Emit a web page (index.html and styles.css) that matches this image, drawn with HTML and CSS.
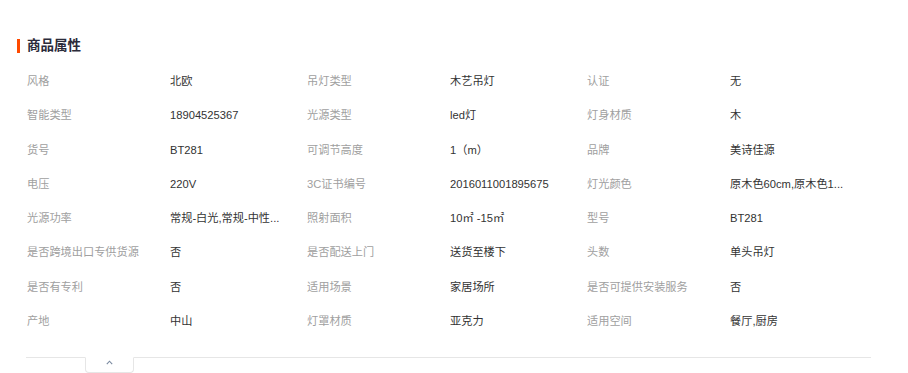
FILE: index.html
```html
<!DOCTYPE html>
<html lang="zh-CN">
<head>
<meta charset="utf-8">
<title>商品属性</title>
<link rel="stylesheet" href="styles.css">
</head>
<body>
<section class="attrs">
  <h2 class="attrs-title">商品属性</h2>
  <dl class="attrs-grid">
    <dt>风格</dt><dd>北欧</dd>
    <dt>吊灯类型</dt><dd>木艺吊灯</dd>
    <dt>认证</dt><dd>无</dd>

    <dt>智能类型</dt><dd>18904525367</dd>
    <dt>光源类型</dt><dd>led灯</dd>
    <dt>灯身材质</dt><dd>木</dd>

    <dt>货号</dt><dd>BT281</dd>
    <dt>可调节高度</dt><dd>1（m）</dd>
    <dt>品牌</dt><dd>美诗佳源</dd>

    <dt>电压</dt><dd>220V</dd>
    <dt>3C证书编号</dt><dd>2016011001895675</dd>
    <dt>灯光颜色</dt><dd>原木色60cm,原木色1...</dd>

    <dt>光源功率</dt><dd>常规-白光,常规-中性...</dd>
    <dt>照射面积</dt><dd>10㎡ -15㎡</dd>
    <dt>型号</dt><dd>BT281</dd>

    <dt>是否跨境出口专供货源</dt><dd>否</dd>
    <dt>是否配送上门</dt><dd>送货至楼下</dd>
    <dt>头数</dt><dd>单头吊灯</dd>

    <dt>是否有专利</dt><dd>否</dd>
    <dt>适用场景</dt><dd>家居场所</dd>
    <dt>是否可提供安装服务</dt><dd>否</dd>

    <dt>产地</dt><dd>中山</dd>
    <dt>灯罩材质</dt><dd>亚克力</dd>
    <dt>适用空间</dt><dd>餐厅,厨房</dd>
  </dl>
  <div class="attrs-foot">
    <button class="fold-tab" type="button" aria-label="收起">
      <svg width="7" height="5" viewBox="0 0 7 5"><path d="M0.8 4.2 L3.5 1.2 L6.2 4.2" fill="none" stroke="#7a8aa0" stroke-width="1.1"/></svg>
    </button>
  </div>
</section>
</body>
</html>
```

FILE: styles.css
```css
html, body {
  margin: 0;
  padding: 0;
  background: #fff;
}

body {
  font-family: "Liberation Sans", "Noto Sans CJK SC", sans-serif;
  color: #333;
}

.attrs {
  padding: 39px 0 0 17px;
  width: 854px;
}

.attrs-title {
  margin: 0;
  border-left: 3px solid #ff4a00;
  padding-left: 7px;
  height: 14px;
  line-height: 14px;
  font-size: 13.5px;
  font-weight: bold;
  color: #2b2b3a;
}

.attrs-grid {
  margin: 11px 0 0 10px;
  display: grid;
  grid-template-columns: 143px 137px 143px 137px 143px 137px;
  grid-auto-rows: 34.3px;
  font-size: 11.2px;
  line-height: 34.3px;
}

.attrs-grid dt,
.attrs-grid dd {
  margin: 0;
  white-space: nowrap;
  overflow: hidden;
}

.attrs-grid dt {
  color: #a0a0a0;
}

.attrs-grid dd {
  color: #333;
}

.attrs-foot {
  position: relative;
  margin: 19px 0 0 9px;
  border-top: 1px solid #e6e6e6;
  height: 16px;
}

.fold-tab {
  position: absolute;
  left: 59px;
  top: -1px;
  width: 49px;
  height: 16px;
  padding: 0;
  border: 1px solid #e6e6e6;
  border-top: 1px solid #fff;
  border-radius: 0 0 4px 4px;
  background: #fff;
  display: flex;
  justify-content: center;
  align-items: flex-start;
  padding-top: 2px;
  box-sizing: border-box;
  cursor: pointer;
}
```
